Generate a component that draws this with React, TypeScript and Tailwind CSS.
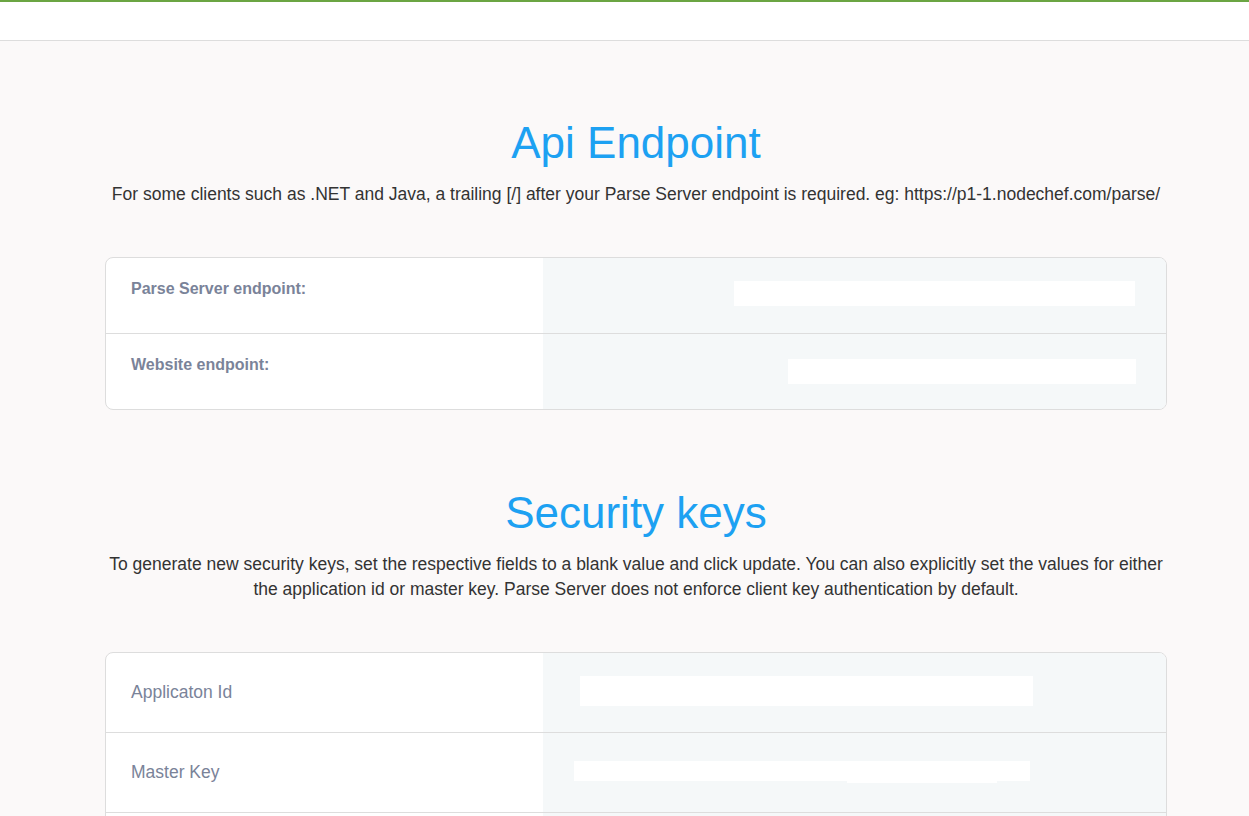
const font = { fontFamily: '"Liberation Sans", Arial, sans-serif' };

type Row = { label: string; boxes: { left: number; width: number; top: number; height: number }[] };

const apiRows: Row[] = [
  { label: "Parse Server endpoint:", boxes: [{ left: 191, width: 401, top: 23, height: 25 }] },
  { label: "Website endpoint:", boxes: [{ left: 245, width: 348, top: 25, height: 25 }] },
];

// third row continues below the fold, its label isn't visible
const keyRows: Row[] = [
  { label: "Applicaton Id", boxes: [{ left: 37, width: 453, top: 23, height: 30 }] },
  {
    label: "Master Key",
    boxes: [
      { left: 31, width: 456, top: 28, height: 20 },
      { left: 304, width: 150, top: 28, height: 22 },
    ],
  },
  { label: "", boxes: [] },
];

function SectionTitle({ title, children }: { title: string; children: React.ReactNode }) {
  return (
    <div className="text-center">
      <h2 className="text-[44px] leading-[50px] font-normal text-[#1da1f2]">{title}</h2>
      <p className="mt-[14px] text-[17.5px] leading-[25px] text-[#333333]">{children}</p>
    </div>
  );
}

function KeyCard({ rows, bold, rowHeight }: { rows: Row[]; bold?: boolean; rowHeight: string }) {
  return (
    <div className="divide-y divide-[#dddddd] overflow-hidden rounded-lg border border-[#dddddd] bg-white">
      {rows.map((row, i) => (
        <div key={i} className={`box-content flex ${rowHeight}`}>
          <div
            className={`w-[437px] shrink-0 pl-[25px] ${
              bold ? "pt-[19px] text-[16px] font-bold leading-[24px]" : "pt-[26px] text-[17.5px] leading-[26px]"
            } text-[#7a8399]`}
          >
            {row.label}
          </div>
          <div className="relative flex-1 bg-[#f5f8f9]">
            {row.boxes.map((b, j) => (
              <span
                key={j}
                className="absolute bg-white"
                style={{ left: b.left, width: b.width, top: b.top, height: b.height }}
              />
            ))}
          </div>
        </div>
      ))}
    </div>
  );
}

export default function App() {
  return (
    <div className="h-[816px] overflow-hidden bg-[#fbf9f9]" style={font}>
      <div className="h-[2px] bg-[#6ba543]" />
      <div className="h-[39px] border-b border-[#dddddd] bg-white" />

      <main className="ml-[105px] w-[1062px]">
        <section className="pt-[77px]">
          <SectionTitle title="Api Endpoint">
            For some clients such as .NET and Java, a trailing [/] after your Parse Server endpoint is required. eg:
            https://p1-1.nodechef.com/parse/
          </SectionTitle>
          <div className="mt-[50px]">
            <KeyCard rows={apiRows} bold rowHeight="h-[75px]" />
          </div>
        </section>

        <section className="pt-[78px]">
          <SectionTitle title="Security keys">
            To generate new security keys, set the respective fields to a blank value and click update. You can also
            explicitly set the values for either the application id or master key. Parse Server does not enforce client
            key authentication by default.
          </SectionTitle>
          <div className="mt-[50px]">
            <KeyCard rows={keyRows} rowHeight="h-[79px]" />
          </div>
        </section>
      </main>
    </div>
  );
}
